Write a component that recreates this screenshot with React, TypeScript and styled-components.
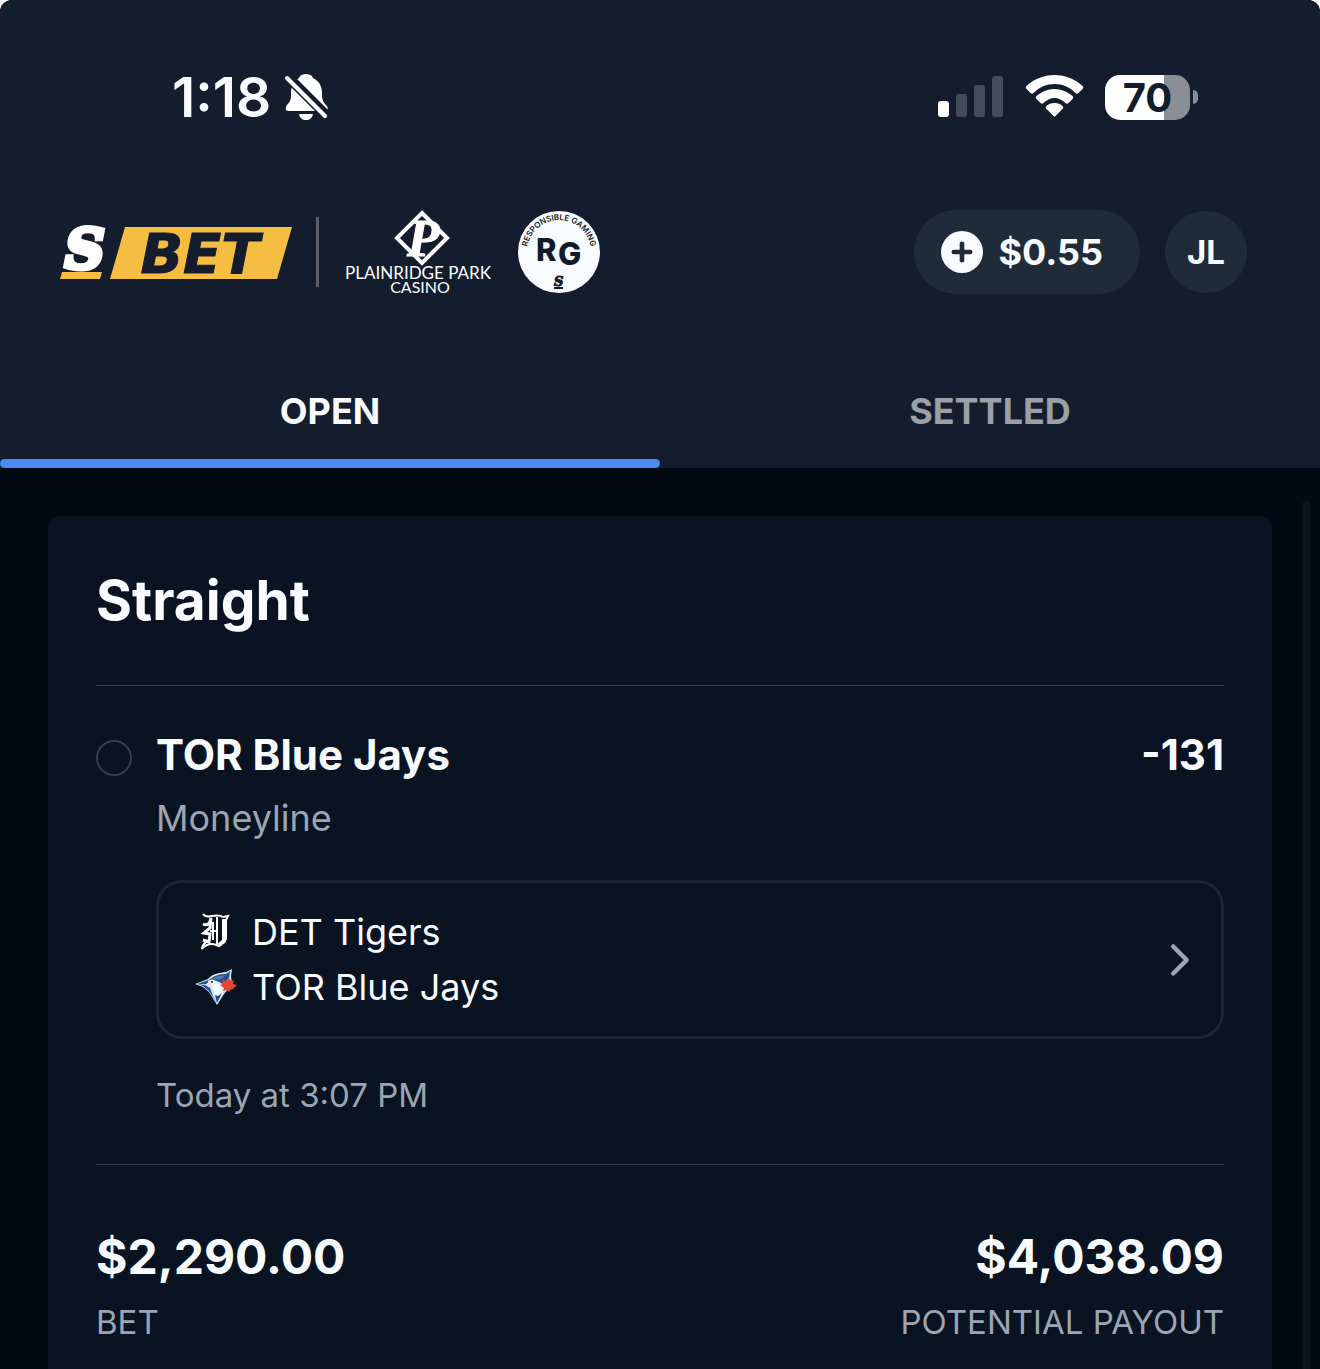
import { ChevronRight, Plus } from 'lucide-react'
import { JSX, useState } from 'react'
import styled, { createGlobalStyle } from 'styled-components'

const GlobalStyle = createGlobalStyle`
	:root {
		--header-color: #141d2d;
		--page-color: #030913;
		--card-color: #091321;
		--pill-color: #202b3a;
		--line-color: #333c48;
		--border-color: #1c2634;
		--color: #f8fbff;
		--muted-color: #9ca5b3;
		--accent-color: #4a8af7;
		--brand-color: #f5bd41;
	}
	* {
		box-sizing: border-box;
	}
	body {
		margin: 0;
		background-color: #fff;
		color: var(--color);
		font-family: Inter, 'Liberation Sans', sans-serif;
	}
	button {
		font-family: inherit;
		color: inherit;
		border: none;
		padding: 0;
		cursor: pointer;
	}
	svg {
		display: block;
		flex-shrink: 0;
		overflow: visible;
	}
`
const Screen = styled.div`
	min-height: 100vh;
	display: flex;
	flex-direction: column;
	background-color: var(--page-color);
	border-radius: 12px 12px 0 0;
	overflow: hidden;
`
const Header = styled.header`
	background-color: var(--header-color);
`
const StatusBar = styled.div`
	display: flex;
	justify-content: space-between;
	align-items: center;
	padding: 64px 122px 0 172px;
	height: 130px;
`
const StatusGroup = styled.div<{ $gap: number }>`
	display: flex;
	align-items: center;
	gap: ${p => p.$gap}px;
`
const Clock = styled.time`
	font-size: 55px;
	line-height: 64px;
	font-weight: 600;
`
const Battery = styled.div`
	display: flex;
	align-items: center;
	gap: 3px;
`
const BatteryBody = styled.div`
	width: 85px;
	height: 45px;
	border-radius: 15px;
	background: linear-gradient(to right, #fff 70%, #8a8f96 70%);
	color: var(--header-color);
	font-size: 40px;
	line-height: 45px;
	font-weight: 700;
	text-align: center;
`
const BatteryTip = styled.div`
	width: 5px;
	height: 14px;
	border-radius: 0 7px 7px 0;
	background-color: #8a8f96;
`
const TopBar = styled.div`
	display: flex;
	justify-content: space-between;
	align-items: center;
	padding: 0 73px 0 60px;
	height: 84px;
	margin-top: 80px;
`
const Brands = styled.div`
	display: flex;
	align-items: center;
	gap: 24px;
`
const Divider = styled.div`
	width: 3px;
	height: 70px;
	background-color: #5a5f69;
`
const Account = styled.div`
	display: flex;
	align-items: center;
	gap: 25px;
`
const Balance = styled.button`
	display: flex;
	align-items: center;
	gap: 15px;
	height: 84px;
	padding: 0 37px 0 27px;
	border-radius: 42px;
	background-color: var(--pill-color);
	font-size: 36px;
	font-weight: 700;
`
const PlusBadge = styled.span`
	display: flex;
	align-items: center;
	justify-content: center;
	width: 42px;
	height: 42px;
	border-radius: 50%;
	background-color: var(--color);
	color: var(--pill-color);
`
const Avatar = styled.button`
	width: 82px;
	height: 82px;
	border-radius: 50%;
	background-color: var(--pill-color);
	font-size: 33px;
	font-weight: 700;
`
const Tabs = styled.div`
	display: grid;
	grid-template-columns: 1fr 1fr;
	margin-top: 60px;
`
const Tab = styled.button<{ $active: boolean }>`
	display: flex;
	flex-direction: column;
	justify-content: flex-end;
	height: 114px;
	background: none;
	font-size: 36px;
	line-height: 44px;
	font-weight: 700;
	color: ${p => (p.$active ? 'var(--color)' : '#9a9fa8')};

	&::after {
		content: '';
		width: 100%;
		height: 9px;
		margin-top: 26px;
		border-radius: 5px;
		background-color: ${p => (p.$active ? 'var(--accent-color)' : 'transparent')};
	}
`
const TabLabel = styled.span`
	width: 100%;
	text-align: center;
`
const Main = styled.main`
	position: relative;
	flex: 1;
	display: flex;
	padding: 48px 48px 0;
`
const ScrollThumb = styled.div`
	position: absolute;
	top: 33px;
	right: 9px;
	bottom: 0;
	width: 9px;
	border-radius: 5px 5px 0 0;
	background-color: #0e121b;
`
const Card = styled.article`
	flex: 1;
	padding: 48px 48px 24px;
	border-radius: 12px 12px 0 0;
	background-color: var(--card-color);
`
const Title = styled.h1`
	margin: 0;
	padding-bottom: 49px;
	border-bottom: 1px solid var(--line-color);
	font-size: 55px;
	line-height: 72px;
	font-weight: 700;
`
const Selection = styled.section`
	display: flex;
	gap: 24px;
	padding: 39px 0 47px;
	border-bottom: 1px solid var(--line-color);
`
const StatusDot = styled.div`
	width: 36px;
	height: 36px;
	margin-top: 15px;
	border: 2px solid #333c48;
	border-radius: 50%;
`
const Details = styled.div`
	flex: 1;
`
const Row = styled.div`
	display: flex;
	justify-content: space-between;
`
const Pick = styled.h2`
	margin: 0;
	font-size: 42px;
	line-height: 60px;
	font-weight: 700;
`
const Market = styled.p`
	margin: 9px 0 0;
	font-size: 36px;
	line-height: 48px;
	color: var(--muted-color);
`
const Game = styled.button`
	display: flex;
	align-items: center;
	justify-content: space-between;
	width: 100%;
	margin: 38px 0 34px;
	padding: 23px 14px 23px 36px;
	border: 3px solid var(--border-color);
	border-radius: 26px;
	background: none;
	font-size: 36px;
	line-height: 52px;
	text-align: left;
`
const Teams = styled.span`
	display: flex;
	flex-direction: column;
	gap: 3px;
`
const Team = styled.span`
	display: flex;
	align-items: center;
	gap: 15px;
`
const StartTime = styled.p`
	margin: 0;
	font-size: 33px;
	line-height: 44px;
	color: var(--muted-color);
`
const Totals = styled.dl`
	display: flex;
	justify-content: space-between;
	margin: 0;
	padding-top: 60px;
`
const Total = styled.div<{ $align: 'left' | 'right' }>`
	display: flex;
	flex-direction: column-reverse;
	gap: 11px;
	text-align: ${p => p.$align};
`
const Amount = styled.dd`
	margin: 0;
	font-size: 48px;
	line-height: 64px;
	font-weight: 700;
`
const AmountLabel = styled.dt`
	font-size: 33px;
	line-height: 44px;
	color: var(--muted-color);
`

function BellOff(): JSX.Element {
	return (
		<svg width='42' height='46' viewBox='0 0 42 46' fill='#fff'>
			<path d='M21 0c3 0 6 1 7 4 6 3 9 8 9 15 0 7 1 9 4 12 3 3 2 6-2 6H4c-4 0-4-3-2-6 4-4 4-6 4-12 0-7 3-12 8-15 1-3 4-4 7-4z' />
			<path d='M14 40h14c-1 4-3 6-7 6s-6-2-7-6z' />
			<path d='M1 1 43 43' stroke='#141d2d' strokeWidth='10' />
			<path d='M2 4 40 42' stroke='#fff' strokeWidth='4' strokeLinecap='round' />
		</svg>
	)
}

function Signal(): JSX.Element {
	return (
		<svg width='66' height='42' viewBox='0 0 66 42' fill='#454c59'>
			<rect x='0' y='25' width='11' height='16' rx='3' fill='#fff' />
			<rect x='18' y='18' width='11' height='23' rx='3' />
			<rect x='36' y='9' width='11' height='32' rx='3' />
			<rect x='54' y='0' width='11' height='41' rx='3' />
		</svg>
	)
}

function Wifi(): JSX.Element {
	return (
		<svg width='57' height='44' viewBox='0 0 57 44' fill='#fff'>
			<path d='M28.500 0c11 0 20.500 4 28 11 1 1 1 2 0 3l-4 4c-1 1-2 1-3 0-6-6-13-9-21-9s-15 3-21 9c-1 1-2 1-3 0l-4-4c-1-1-1-2 0-3C8 4 17.500 0 28.500 0z' />
			<path d='M28.500 14c7 0 13 3 18 7 1 1 1 2 0 3l-4 4c-1 1-2 1-3 0-3-3-7-5-11-5s-8 2-11 5c-1 1-2 1-3 0l-4-4c-1-1-1-2 0-3 5-4 11-7 18-7z' />
			<path d='M28.500 28c3.500 0 6 1 8 3 1 1 1 2 0 3l-7 7c-1 1-1 1-2 0l-7-7c-1-1-1-2 0-3 2-2 4.500-3 8-3z' />
		</svg>
	)
}

function SBetLogo(): JSX.Element {
	return (
		<svg width='232' height='56' viewBox='0 0 232 56' role='img' aria-label='S BET'>
			<path d='M65 3h167l-15 52H50z' fill='#f5bd41' />
			<path d='M2 48h40l-2 7H0z' fill='#f5bd41' />
			<text
				x='5'
				y='44'
				fontFamily='"DejaVu Serif", serif'
				fontSize='55'
				fontWeight='700'
				fontStyle='italic'
				fill='#fff'
				stroke='#fff'
				strokeWidth='5'
			>
				S
			</text>
			<text
				x='140'
				y='49'
				textAnchor='middle'
				fontFamily='"DejaVu Sans", sans-serif'
				fontSize='56'
				fontWeight='700'
				fontStyle='italic'
				fill='#141d2d'
				stroke='#141d2d'
				strokeWidth='1'
			>
				BET
			</text>
		</svg>
	)
}

function CasinoLogo(): JSX.Element {
	return (
		<svg width='151' height='84' viewBox='0 0 151 84' fill='#fff'>
			<path d='M79 3 104 28 79 53 54 28z' fill='none' stroke='#fff' strokeWidth='4' />
			<text
				x='64'
				y='46'
				fontFamily='"Liberation Serif", serif'
				fontSize='53'
				fontWeight='700'
				fontStyle='italic'
				stroke='#fff'
			>
				P
			</text>
			<text
				x='75'
				y='69'
				textAnchor='middle'
				fontFamily='Lato, sans-serif'
				fontSize='17'
			>
				PLAINRIDGE PARK
			</text>
			<text
				x='77'
				y='83'
				textAnchor='middle'
				fontFamily='Lato, sans-serif'
				fontSize='16'
			>
				CASINO
			</text>
		</svg>
	)
}

function ResponsibleGaming(): JSX.Element {
	return (
		<svg width='82' height='82' viewBox='0 0 82 82' fill='#111a28'>
			<circle cx='41' cy='41' r='41' fill='#f8fbff' />
			<path id='rg-arc' d='M9 41a32 32 0 0 1 64 0' fill='none' />
			<text fontSize='8' fontWeight='600' textAnchor='middle'>
				<textPath href='#rg-arc' startOffset='50%'>
					RESPONSIBLE GAMING
				</textPath>
			</text>
			<text x='18' y='50' fontSize='31' fontWeight='800'>
				R
			</text>
			<text x='40' y='54' fontSize='31' fontWeight='800'>
				G
			</text>
			<text
				x='36'
				y='75'
				fontFamily='"DejaVu Serif", serif'
				fontSize='13'
				fontWeight='700'
				fontStyle='italic'
				stroke='#111a28'
			>
				S
			</text>
			<path d='M36 76h9v2h-9z' />
		</svg>
	)
}

function TigersLogo(): JSX.Element {
	return (
		<svg width='42' height='42' viewBox='0 0 42 42' fill='none' stroke='#fff'>
			<path d='M8 3c2 3 5 3 9 2 5-1 8-1 11 1l5-1-2 4v19l-7 7c-4-2-8-3-12-1-2 1-4 2-5 4 0-4 2-6 6-8' strokeWidth='2' />
			<path d='M8 13c4 2 7 0 8-6l-1 10-6 5 6 1-1 8-6-2' strokeWidth='3' />
			<path d='M29 8v22l-5 4' strokeWidth='4' />
			<path d='M22 6v28M18 11v18M15 20h8' strokeWidth='2' />
		</svg>
	)
}

function BlueJaysLogo(): JSX.Element {
	return (
		<svg width='42' height='36' viewBox='0 0 42 36'>
			<path d='M0 15 13 10C18 4 25 4 31 3l6-3-1 7 1 8-8 10-7 11-8-13-6-5z' fill='#dce4ed' />
			<path d='m2 15 12-4C19 6 26 5 31 5l4-3-1 7-6 6-6-3-6-1-5 4z' fill='#1d4f95' />
			<path d='m15 10 8-3 8-1-6 5z' fill='#4c7ab4' />
			<path d='M13 12c3-2 6-2 8 1l-3 3-5-2z' fill='#f8fbff' />
			<circle cx='17' cy='13' r='1' fill='#0d2140' />
			<path d='m2 15 8 1 5 3 3 8 4 7-8-12-6-5z' fill='#1d4f95' />
			<path d='m17 17 5-3 5 4 1 7-5 6-3-5z' fill='#f8fbff' />
			<path d='m20 26 3 1 4-3-5 10z' fill='#1d4f95' />
			<path d='m34 9 2 3 3-1-1 4 4 1-4 4-3 1-1 2-2-2-4 1 1-3-4-3 3-1-1-4 4 1z' fill='#e3472f' />
		</svg>
	)
}

export default function App(): JSX.Element {
	const [tab, setTab] = useState('OPEN')

	return (
		<>
			<GlobalStyle />
			<Screen>
				<Header>
					<StatusBar>
						<StatusGroup $gap={14}>
							<Clock>1:18</Clock>
							<BellOff />
						</StatusGroup>
						<StatusGroup $gap={22}>
							<Signal />
							<Wifi />
							<Battery>
								<BatteryBody>70</BatteryBody>
								<BatteryTip />
							</Battery>
						</StatusGroup>
					</StatusBar>
					<TopBar>
						<Brands>
							<SBetLogo />
							<Divider />
							<CasinoLogo />
							<ResponsibleGaming />
						</Brands>
						<Account>
							<Balance>
								<PlusBadge>
									<Plus size={28} strokeWidth={4} />
								</PlusBadge>
								$0.55
							</Balance>
							<Avatar>JL</Avatar>
						</Account>
					</TopBar>
					<Tabs role='tablist'>
						{['OPEN', 'SETTLED'].map(name => (
							<Tab
								key={name}
								role='tab'
								aria-selected={tab === name}
								$active={tab === name}
								onClick={() => setTab(name)}
							>
								<TabLabel>{name}</TabLabel>
							</Tab>
						))}
					</Tabs>
				</Header>
				<Main>
					<Card>
						<Title>Straight</Title>
						<Selection>
							<StatusDot />
							<Details>
								<Row>
									<Pick>TOR Blue Jays</Pick>
									<Pick as='span'>-131</Pick>
								</Row>
								<Market>Moneyline</Market>
								<Game>
									<Teams>
										<Team>
											<TigersLogo />
											DET Tigers
										</Team>
										<Team>
											<BlueJaysLogo />
											TOR Blue Jays
										</Team>
									</Teams>
									<ChevronRight size={54} strokeWidth={2} color='#9ca5b3' />
								</Game>
								<StartTime>Today at 3:07 PM</StartTime>
							</Details>
						</Selection>
						<Totals>
							<Total $align='left'>
								<AmountLabel>BET</AmountLabel>
								<Amount>$2,290.00</Amount>
							</Total>
							<Total $align='right'>
								<AmountLabel>POTENTIAL PAYOUT</AmountLabel>
								<Amount>$4,038.09</Amount>
							</Total>
						</Totals>
					</Card>
					<ScrollThumb />
				</Main>
			</Screen>
		</>
	)
}
